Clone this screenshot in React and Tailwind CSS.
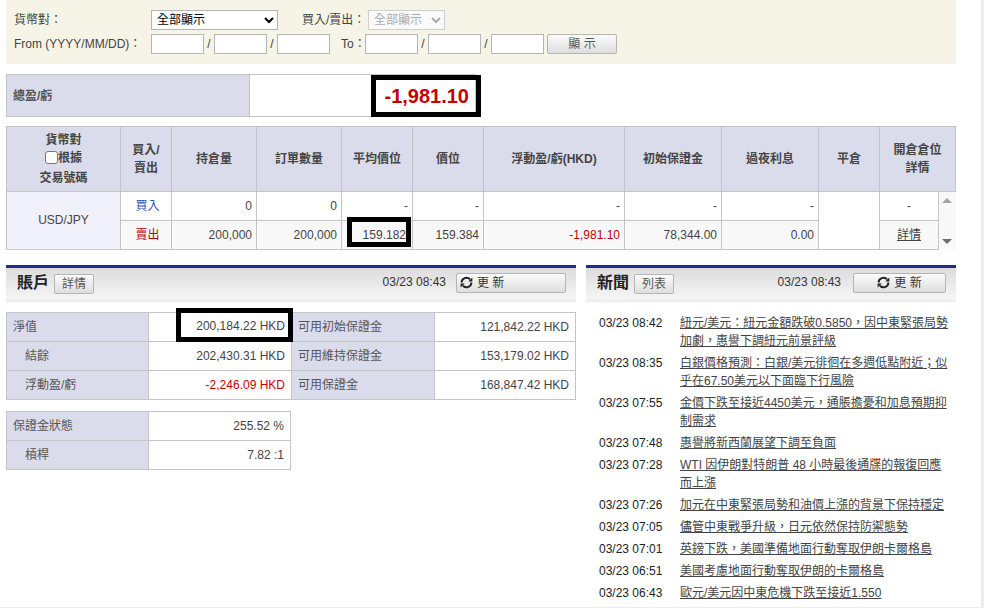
import React from "react";

const FONT = "[font-family:'Liberation_Sans','Noto_Sans_CJK_TC',sans-serif]";

function Refresh() {
  return (
    <svg width="13" height="13" viewBox="0 0 13 13" fill="none" className="shrink-0">
      <path d="M1.6 6.6A4.9 4.9 0 0 1 10 3.2" stroke="#222" strokeWidth="2" fill="none" />
      <path d="M11.4 6.4A4.9 4.9 0 0 1 3 9.8" stroke="#222" strokeWidth="2" fill="none" />
      <path d="M12.4 1.4v4.2H8.2z" fill="#222" />
      <path d="M.6 11.6V7.4h4.2z" fill="#222" />
    </svg>
  );
}

function DateInput({ className = "" }) {
  return <input className={`w-[53px] h-[20px] bg-white border border-[#b5b5b5] ${className}`} />;
}

function SmallBtn({ children }) {
  return (
    <button className="mt-[1px] h-[20px] w-[40px] rounded-[2px] border border-[#b5b5b5] bg-gradient-to-b from-[#fbfbfb] to-[#dedede] text-[12px] text-[#555]">
      {children}
    </button>
  );
}

function PanelHeader({ title, btn, refreshClass }) {
  return (
    <div className="h-[37px] border-t-[3px] border-[#1c2d8f] bg-[#eeeeee]">
      <div className="h-[31px] bg-gradient-to-b from-[#dcdcdc] to-[#f5f5f5] flex items-center pl-[11px] pr-[10px]">
        <span className="text-[16px] font-bold text-[#222] mr-[5px] leading-none">{title}</span>
        <SmallBtn>{btn}</SmallBtn>
        <span className="ml-auto text-[12px] text-[#333] mb-[3px]">03/23 08:43</span>
        <button className={`mb-[1px] h-[20px] flex items-center rounded-[2px] border border-[#b5b5b5] bg-gradient-to-b from-[#fbfbfb] to-[#dedede] text-[12px] text-[#333] ${refreshClass}`}>
          <Refresh />
          <span className="ml-[4px]">更 新</span>
        </button>
      </div>
    </div>
  );
}

const th = "border border-[#c4c4c4] bg-[#dbdceb] text-[12px] font-bold text-[#444] text-center align-middle leading-[18px] p-0";
const td = "border border-[#c4c4c4] text-[12px] text-[#444] text-right align-middle pr-[4px] pl-0 py-0";
const lbl = "border border-[#c4c4c4] bg-[#dbdceb] text-[12px] text-[#555] text-left align-middle pl-[6px] p-0";
const lblIn = "border border-[#c4c4c4] bg-[#dbdceb] text-[12px] text-[#555] text-left align-middle pl-[18px] p-0";
const val = "border border-[#c4c4c4] bg-white text-[12px] text-[#444] text-right align-middle pr-[6px] p-0";

const colWidths = [114, 51, 85, 85, 71, 71, 141, 97, 97, 61, 59, 17];

const news = [
  ["03/23 08:42", "紐元/美元：紐元金額跌破0.5850，因中東緊張局勢加劇，惠譽下調紐元前景評級"],
  ["03/23 08:35", "白銀價格預測：白銀/美元徘徊在多週低點附近；似乎在67.50美元以下面臨下行風險"],
  ["03/23 07:55", "金價下跌至接近4450美元，通脹擔憂和加息預期抑制需求"],
  ["03/23 07:48", "惠譽將新西蘭展望下調至負面"],
  ["03/23 07:28", "WTI 因伊朗對特朗普 48 小時最後通牒的報復回應而上漲"],
  ["03/23 07:26", "加元在中東緊張局勢和油價上漲的背景下保持穩定"],
  ["03/23 07:05", "儘管中東戰爭升級，日元依然保持防禦態勢"],
  ["03/23 07:01", "英鎊下跌，美國準備地面行動奪取伊朗卡爾格島"],
  ["03/23 06:51", "美國考慮地面行動奪取伊朗的卡爾格島"],
  ["03/23 06:43", "歐元/美元因中東危機下跌至接近1.550"],
];

export default function App() {
  return (
    <div className={`relative w-[984px] h-[608px] overflow-hidden bg-white ${FONT} text-[12px] text-[#333]`}>
      <div className="absolute right-0 top-0 bottom-0 w-[3px] bg-[#ececf2]" />
      <div className="absolute left-0 right-0 bottom-0 h-[1px] bg-[#ececf2]" />
      <div className="w-[950px] ml-[6px]">
        {/* Filter */}
        <div className="h-[64px] bg-[#f6f4e6] pt-[10px] pl-[8px] text-[#444]">
          <div className="flex items-center h-[20px]">
            <span className="w-[137px]">貨幣對：</span>
            <select className="w-[127px] h-[20px] bg-white border border-[#b5b5b5] text-[12px] text-black pl-[1px]">
              <option>全部顯示</option>
            </select>
            <span className="ml-[24px] w-[66px]">買入/賣出：</span>
            <select disabled className="w-[77px] h-[20px] bg-[#fafafa] border border-[#cfcfcf] text-[12px] text-[#aaa] pl-[1px]">
              <option>全部顯示</option>
            </select>
          </div>
          <div className="flex items-center h-[20px] mt-[4px]">
            <span className="w-[137px]">From (YYYY/MM/DD)：</span>
            <DateInput />
            <span className="w-[10px] text-center">/</span>
            <DateInput />
            <span className="w-[10px] text-center">/</span>
            <DateInput />
            <span className="w-[35px] pl-[11px]">To：</span>
            <DateInput />
            <span className="w-[10px] text-center">/</span>
            <DateInput />
            <span className="w-[10px] text-center">/</span>
            <DateInput />
            <button className="ml-[3px] w-[70px] h-[20px] rounded-[2px] border border-[#b5b5b5] bg-gradient-to-b from-[#fbfbfb] to-[#dedede] text-[12px] text-[#555]">
              顯 示
            </button>
          </div>
        </div>

        {/* Total */}
        <table className="relative mt-[10px] w-[470px] h-[42px] table-fixed border-collapse">
          <colgroup>
            <col className="w-[243px]" />
            <col />
          </colgroup>
          <tbody>
            <tr className="h-[42px]">
              <td className={`${lbl} font-bold`}>總盈/虧</td>
              <td className="border border-[#c4c4c4] bg-white relative p-0">
                <div className="absolute left-[121px] top-0 w-[110px] h-[42px] border-[5px] border-black flex items-center justify-end pr-[7px] text-[20px] font-bold text-[#c40000]">
                  -1,981.10
                </div>
              </td>
            </tr>
          </tbody>
        </table>

        {/* Positions */}
        <table className="mt-[9px] w-[950px] table-fixed border-collapse">
          <colgroup>
            {colWidths.map((w, i) => (
              <col key={i} style={{ width: w }} />
            ))}
          </colgroup>
          <thead>
            <tr className="h-[65px]">
              <th className={th}>
                貨幣對
                <br />
                <span className="inline-flex items-center">
                  <span className="inline-block w-[13px] h-[13px] bg-white border border-[#777] rounded-[3px]" />
                  根據
                </span>
                <br />
                交易號碼
              </th>
              <th className={th}>
                買入/
                <br />
                賣出
              </th>
              <th className={th}>持倉量</th>
              <th className={th}>訂單數量</th>
              <th className={th}>平均價位</th>
              <th className={th}>價位</th>
              <th className={th}>浮動盈/虧(HKD)</th>
              <th className={th}>初始保證金</th>
              <th className={th}>過夜利息</th>
              <th className={th}>平倉</th>
              <th className={th} colSpan={2}>
                開倉倉位
                <br />
                詳情
              </th>
            </tr>
          </thead>
          <tbody>
            <tr className="h-[29px]">
              <td rowSpan={2} className={`${td} !text-center !pr-0 bg-[#f0f1fa]`}>
                USD/JPY
              </td>
              <td className={`${td} !text-center !pr-0 !pl-[3px] !text-[#2a4fb5]`}>買入</td>
              <td className={td}>0</td>
              <td className={td}>0</td>
              <td className={td}>-</td>
              <td className={td}>-</td>
              <td className={td}>-</td>
              <td className={td}>-</td>
              <td className={td}>-</td>
              <td rowSpan={2} className={`${td} bg-white`} />
              <td className={`${td} !text-center !pr-0`}>-</td>
              <td rowSpan={2} className="bg-[#f8f8f8] p-0 align-top">
                <div className="h-[57px] flex flex-col items-center justify-between pt-[6px] pb-[5px]">
                  <span className="w-0 h-0 border-x-[5px] border-x-transparent border-b-[5px] border-b-[#a3a3a3]" />
                  <span className="w-0 h-0 border-x-[5px] border-x-transparent border-t-[5px] border-t-[#6e6e6e]" />
                </div>
              </td>
            </tr>
            <tr className="h-[28px] bg-[#f8f8f8]">
              <td className={`${td} !text-center !pr-0 !pl-[3px] !text-[#c40000]`}>賣出</td>
              <td className={td}>200,000</td>
              <td className={td}>200,000</td>
              <td className={`${td} relative`}>
                <div className="absolute left-[5px] right-[1px] -top-[4px] bottom-[2px] border-[5px] border-black flex items-end justify-end text-[#444] leading-[14px]">
                  159.182
                </div>
              </td>
              <td className={td}>159.384</td>
              <td className={`${td} !text-[#c40000]`}>-1,981.10</td>
              <td className={td}>78,344.00</td>
              <td className={td}>0.00</td>
              <td className={`${td} !text-center !pr-0 underline`}>詳情</td>
            </tr>
          </tbody>
        </table>

        {/* Panels */}
        <div className="flex mt-[15px] gap-[10px]">
          <div className="w-[570px]">
            <PanelHeader title="賬戶" btn="詳情" refreshClass="ml-[10px] w-[110px] pl-[3px]" />
            <table className="mt-[10px] w-[570px] table-fixed border-collapse">
              <colgroup>
                <col className="w-[142px]" />
                <col className="w-[143px]" />
                <col className="w-[143px]" />
                <col />
              </colgroup>
              <tbody>
                <tr className="h-[29px]">
                  <td className={lbl}>淨值</td>
                  <td className={`${val} relative`}>
                    <div className="absolute left-[27px] -right-[2px] -top-[5px] -bottom-[1px] border-[5px] border-black flex items-center justify-end pr-[3px] pt-[3px]">
                      200,184.22 HKD
                    </div>
                  </td>
                  <td className={lbl}>可用初始保證金</td>
                  <td className={val}>121,842.22 HKD</td>
                </tr>
                <tr className="h-[29px]">
                  <td className={lblIn}>結餘</td>
                  <td className={val}>202,430.31 HKD</td>
                  <td className={lbl}>可用維持保證金</td>
                  <td className={val}>153,179.02 HKD</td>
                </tr>
                <tr className="h-[29px]">
                  <td className={lblIn}>浮動盈/虧</td>
                  <td className={`${val} !text-[#c40000]`}>-2,246.09 HKD</td>
                  <td className={lbl}>可用保證金</td>
                  <td className={val}>168,847.42 HKD</td>
                </tr>
              </tbody>
            </table>
            <table className="mt-[11px] w-[285px] table-fixed border-collapse">
              <colgroup>
                <col className="w-[142px]" />
                <col />
              </colgroup>
              <tbody>
                <tr className="h-[29px]">
                  <td className={lbl}>保證金狀態</td>
                  <td className={val}>255.52 %</td>
                </tr>
                <tr className="h-[29px]">
                  <td className={lblIn}>槓桿</td>
                  <td className={val}>7.82 :1</td>
                </tr>
              </tbody>
            </table>
          </div>

          <div className="w-[370px]">
            <PanelHeader title="新聞" btn="列表" refreshClass="ml-[12px] w-[93px] justify-center" />
            <div className="mt-[12px] flex flex-col gap-[4px] pl-[13px]">
              {news.map(([t, title]) => (
                <div key={t} className="flex leading-[18px] text-[12px]">
                  <span className="w-[81px] shrink-0 text-[#222]">{t}</span>
                  <a className="w-[270px] underline text-[#444]">{title}</a>
                </div>
              ))}
            </div>
          </div>
        </div>
      </div>
    </div>
  );
}
